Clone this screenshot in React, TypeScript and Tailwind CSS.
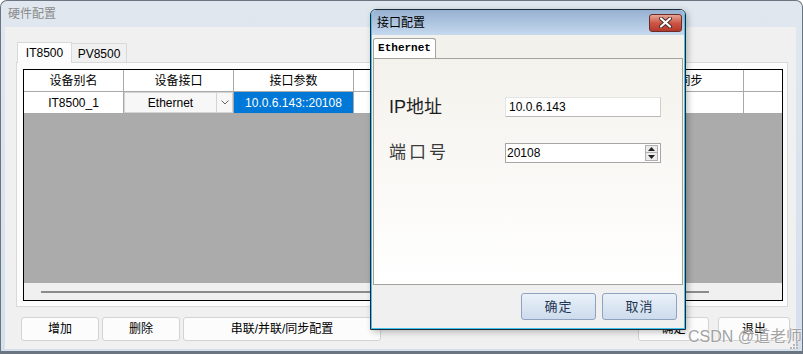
import React from 'react';

const columns = [
  { w: 'w-[100px]', title: '设备别名' },
  { w: 'w-[110px]', title: '设备接口' },
  { w: 'w-[120px]', title: '接口参数' },
  { w: 'w-[140px]', title: '设备状态' },
  { w: 'w-[120px]', title: '设备类型' },
  { w: 'w-[130px]', title: '主从同步' },
  { w: 'w-[38px]', title: '' },
];

const MainButton = ({ label, className }: { label: string; className: string }) => (
  <button
    className={`h-[24px] rounded-[3px] border border-[#d3d3d3] bg-[#fcfcfc] text-[12px] text-black ${className}`}
  >
    {label}
  </button>
);

const DialogButton = ({ label }: { label: string }) => (
  <button className="h-[27px] w-[75px] rounded-[3px] border border-[#8ea3bf] bg-gradient-to-b from-[#eaf1f9] to-[#cddbec] text-[13px] tracking-[1px] text-[#1f3553]">
    {label}
  </button>
);

const CloseButton = () => (
  <div className="ml-auto mr-[2px] flex h-[18px] w-[33px] items-center justify-center rounded-[3px] border border-[#6e2a24] bg-gradient-to-b from-[#e6a596] via-[#cc5646] to-[#b3382b]">
    <svg width="15" height="11" viewBox="0 0 15 11">
      <path d="M3 1.5 L12 9.5 M12 1.5 L3 9.5" stroke="#4a2a28" strokeWidth="4" strokeLinecap="round" />
      <path d="M3 1.5 L12 9.5 M12 1.5 L3 9.5" stroke="#ffffff" strokeWidth="2.2" strokeLinecap="round" />
    </svg>
  </div>
);

const PortDialog = () => (
  <div className="absolute left-[370px] top-[9px] h-[321px] w-[316px] rounded-t-[6px] border border-[#1d2a38] shadow-[2px_2px_6px_rgba(0,0,0,0.25)]">
    <div className="flex h-full flex-col rounded-t-[5px] border-x border-b border-[#40c3ee] bg-[#f0f0f0]">
      {/* Title bar */}
      <div className="flex h-[25px] items-center rounded-t-[5px] bg-gradient-to-b from-[#97b1d1] to-[#c5d9ee] pl-[5px]">
        <span className="text-[12px] text-black">接口配置</span>
        <CloseButton />
      </div>

      {/* Tab control */}
      <div className="flex flex-col bg-[#f3f1eb] px-[1px]">
        <div className="flex h-[23px] items-end">
          <div className="flex h-[20px] w-[63px] items-center justify-center rounded-t-[3px] border-x border-t border-[#a3a3a3] bg-white font-['Liberation_Mono',monospace] text-[11px] font-bold text-black">
            Ethernet
          </div>
        </div>
        <div className="h-[227px] border border-[#a3a29c] bg-gradient-to-b from-[#f4f2ec] to-white pl-[15px] pt-[38px]">
          <div className="grid grid-cols-[116px_156px] items-center gap-y-[26px]">
            <span className="text-[18px] leading-[20px] text-[#1e1e1e]">IP地址</span>
            <div className="flex h-[20px] items-center border border-[#e4e4e4] border-b-[#b9b9b9] border-r-[#cfcfcf] bg-white pl-[3px] text-[12px] text-black">
              10.0.6.143
            </div>
            <span className="text-[17px] leading-[20px] tracking-[3px] text-[#3a3a3a]">端口号</span>
            <div className="flex h-[20px] items-center border border-[#a6a6a6] bg-white pl-[1px] pr-[2px] text-[12px] text-black">
              <span className="flex-1">20108</span>
              <div className="flex flex-col">
                <div className="flex h-[8px] w-[13px] items-center justify-center border border-[#b0b0b0] bg-[#ececec]">
                  <svg width="7" height="4" viewBox="0 0 7 4">
                    <path d="M0 4 L3.5 0 L7 4 Z" fill="#222" />
                  </svg>
                </div>
                <div className="flex h-[8px] w-[13px] items-center justify-center border border-t-0 border-[#b0b0b0] bg-[#ececec]">
                  <svg width="7" height="4" viewBox="0 0 7 4">
                    <path d="M0 0 L3.5 4 L7 0 Z" fill="#222" />
                  </svg>
                </div>
              </div>
            </div>
          </div>
        </div>
      </div>

      {/* Buttons */}
      <div className="flex flex-1 justify-end gap-[6px] pr-[7px] pt-[8px]">
        <DialogButton label="确定" />
        <DialogButton label="取消" />
      </div>
    </div>
  </div>
);

const DeviceGrid = () => (
  <div className="flex h-[232px] w-[760px] flex-col border border-black bg-white">
    {/* Header */}
    <div className="flex h-[22px] border-b border-[#a9a9a9]">
      {columns.map((c, i) => (
        <div
          key={i}
          className={`${c.w} flex items-center justify-center ${i < columns.length - 1 ? 'border-r border-[#a9a9a9]' : ''}`}
        >
          {c.title}
        </div>
      ))}
    </div>

    {/* Row 1 */}
    <div className="flex h-[22px] border-b border-[#a9a9a9]">
      <div className="flex w-[100px] items-center justify-center border-r border-[#a9a9a9]">IT8500_1</div>
      <div className="flex w-[110px] border-r border-[#a9a9a9]">
        <div className="flex flex-1 items-center border border-[#d4d4d4] bg-[#f7f7f7]">
          <span className="flex-1 text-center">Ethernet</span>
          <div className="flex h-full w-[16px] items-center justify-center border-l border-[#d4d4d4]">
            <svg width="8" height="5" viewBox="0 0 8 5">
              <path d="M0.5 0.5 L4 4 L7.5 0.5" stroke="#666" fill="none" />
            </svg>
          </div>
        </div>
      </div>
      <div className="flex w-[120px] items-center justify-center border-r border-[#a9a9a9] bg-[#0078d7] text-white">
        10.0.6.143::20108
      </div>
      <div className="w-[140px] border-r border-[#a9a9a9]" />
      <div className="w-[120px] border-r border-[#a9a9a9]" />
      <div className="w-[130px] border-r border-[#a9a9a9]" />
      <div className="w-[38px]" />
    </div>

    {/* Empty area */}
    <div className="flex-1 bg-[#ababab]" />

    {/* Horizontal scroll bar */}
    <div className="h-[17px] bg-[#f0f0f0] pl-[17px] pt-[8px]">
      <div className="h-[2px] w-[668px] bg-[#8b8b8b]" />
    </div>
  </div>
);

const App = () => {
  return (
    <div className="relative h-[354px] w-[803px] overflow-hidden bg-white font-['Liberation_Sans','Noto_Sans_CJK_SC',sans-serif] text-[12px] text-black">
      {/* Main window */}
      <div className="flex h-full flex-col rounded-t-[7px] border border-b-[3px] border-[#6b7582] bg-gradient-to-b from-[#e0e7ef] to-[#d5e0ed]">
        <div className="flex h-[26px] items-center pl-[7px] text-[12px] text-[#8b8b8b]">硬件配置</div>

        <div className="mb-[2px] ml-[4px] mr-[6px] flex flex-1 flex-col bg-[#f0f0f0] pt-[15px]">
          {/* Tabs */}
          <div className="flex pl-[12px]">
            <div className="z-10 flex h-[21px] w-[55px] items-center justify-center border-x border-t border-[#d9d9d9] bg-[#fcfcfc]">
              IT8500
            </div>
            <div className="mt-[1px] flex h-[20px] w-[55px] items-center justify-center border-r border-t border-[#d9d9d9] bg-[#f0f0f0]">
              PV8500
            </div>
          </div>

          {/* Tab page */}
          <div className="-mt-px ml-[11px] h-[245px] w-[772px] border border-[#d9d9d9] bg-[#fcfcfc] pl-[6px] pt-[6px]">
            <DeviceGrid />
          </div>

          {/* Bottom buttons */}
          <div className="mt-[10px] flex pl-[16px] pr-[6px]">
            <MainButton label="增加" className="w-[78px]" />
            <MainButton label="删除" className="ml-[3px] w-[78px]" />
            <MainButton label="串联/并联/同步配置" className="ml-[3px] w-[198px]" />
            <MainButton label="确定" className="ml-auto w-[71px]" />
            <MainButton label="退出" className="ml-[9px] w-[72px]" />
          </div>
        </div>
      </div>

      <PortDialog />

      {/* Watermark */}
      <div className="absolute left-[688px] top-[327px] text-[16px] leading-[20px] text-[#a3a3a3] [text-shadow:0_0_2px_#ffffff]">
        CSDN @道老师
      </div>
      <svg className="absolute left-[790px] top-[341px]" width="8" height="8" viewBox="0 0 8 8">
        <rect x="6" y="0" width="2" height="2" fill="#b8b8b8" />
        <rect x="3" y="3" width="2" height="2" fill="#b8b8b8" />
        <rect x="6" y="3" width="2" height="2" fill="#b8b8b8" />
        <rect x="0" y="6" width="2" height="2" fill="#b8b8b8" />
        <rect x="3" y="6" width="2" height="2" fill="#b8b8b8" />
        <rect x="6" y="6" width="2" height="2" fill="#b8b8b8" />
      </svg>
    </div>
  );
};

export default App;
